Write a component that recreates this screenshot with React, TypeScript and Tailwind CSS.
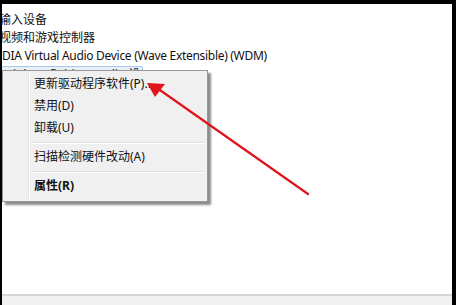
import React from "react";

const font = { fontFamily: '"Noto Sans", "Noto Sans CJK SC", sans-serif' };

function Item({ label, bold }: { label: string; bold?: boolean }) {
  return (
    <div className={`h-[22px] flex items-center pl-[29px] text-[12px] text-[#111] ${bold ? "font-bold" : ""}`}>
      {label}
    </div>
  );
}

function Sep() {
  return (
    <div className="h-[7px] flex flex-col justify-center pl-[26px]">
      <div className="h-px bg-[#e0e0e0]" />
      <div className="h-px bg-white" />
    </div>
  );
}

export default function App() {
  return (
    <div className="w-[456px] h-[305px] bg-black pt-[4px] pl-[2px] pr-[4px] overflow-hidden" style={font}>
      <div className="relative w-full h-full bg-white flex flex-col overflow-hidden">
        <div className="flex-1 flex flex-col pt-[7px] text-[12px] text-[#111] leading-[18px]">
          <div className="-ml-[3px] whitespace-nowrap">输入设备</div>
          <div className="-ml-[3px] whitespace-nowrap">视频和游戏控制器</div>
          <div className="whitespace-nowrap tracking-[-0.3px]">DIA Virtual Audio Device (Wave Extensible) (WDM)</div>
          <div className="mt-[1px] w-[142px] h-[18px] -ml-px border border-[#a8c8ea] bg-[#e8f1fb] rounded-[2px] whitespace-nowrap overflow-hidden pl-[2px] leading-[16px]">
            High Definition Audio 设备
          </div>
        </div>
        <div className="h-[11px] border-t-2 border-[#d6d6d6] bg-[#f0f0f0]" />

        <div className="absolute left-0 top-[66px] w-[206px] h-[132px] bg-[#f0f0f0] border border-[#979797] p-[2px] shadow-[3px_3px_2px_rgba(0,0,0,0.45)]">
          <div className="absolute left-[25px] top-[2px] bottom-[2px] w-px bg-[#e2e3e3]" />
          <div className="absolute left-[26px] top-[2px] bottom-[2px] w-px bg-white" />
          <div className="relative flex flex-col">
            <Item label="更新驱动程序软件(P)..." />
            <Item label="禁用(D)" />
            <Item label="卸载(U)" />
            <Sep />
            <Item label="扫描检测硬件改动(A)" />
            <Sep />
            <Item label="属性(R)" bold />
          </div>
        </div>

        <svg className="absolute left-0 top-0" width="456" height="305" viewBox="0 0 456 305">
          <line x1="155" y1="84" x2="306" y2="190" stroke="#e0141c" strokeWidth="2.2" strokeLinecap="round" />
          <polygon points="145,79 163,80 153,93" fill="#e0141c" />
        </svg>
      </div>
    </div>
  );
}
